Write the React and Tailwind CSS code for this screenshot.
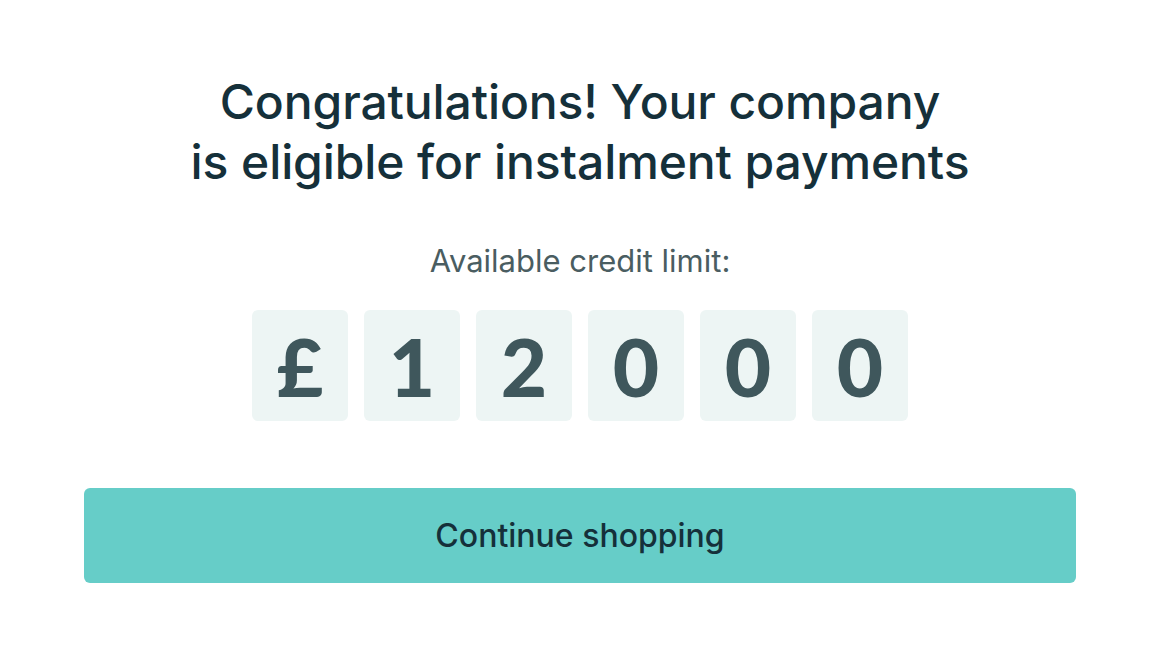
import React from 'react';

const digits = ['£', '1', '2', '0', '0', '0'];

export default function App() {
    return (
        <div
            className="w-full h-[660px] bg-white flex flex-col items-center text-[#15303a]"
            style={{ fontFamily: 'Inter, "Noto Sans", sans-serif' }}
        >
            <h1 className="mt-[72px] text-[48px] leading-[60px] font-medium text-center tracking-[-0.1px]">
                Congratulations! Your company
                <br />
                is eligible for instalment payments
            </h1>

            <p className="mt-[51px] text-[31px] leading-[36px] text-[#4a5d61]">Available credit limit:</p>

            {/* credit amount split into tiles */}
            <div className="mt-[31px] flex gap-4">
                {digits.map((d, i) => (
                    <div
                        key={i}
                        className="w-24 h-[111px] rounded-md bg-[#edf5f4] flex items-center justify-center text-[80px] font-black text-[#3f575c]"
                        style={{ fontFamily: 'Lato, sans-serif' }}
                    >
                        {d}
                    </div>
                ))}
            </div>

            <button className="mt-[67px] w-[992px] h-[95px] rounded-md bg-[#66cdc8] text-[32px] font-medium text-[#15303a]">
                Continue shopping
            </button>
        </div>
    );
}
